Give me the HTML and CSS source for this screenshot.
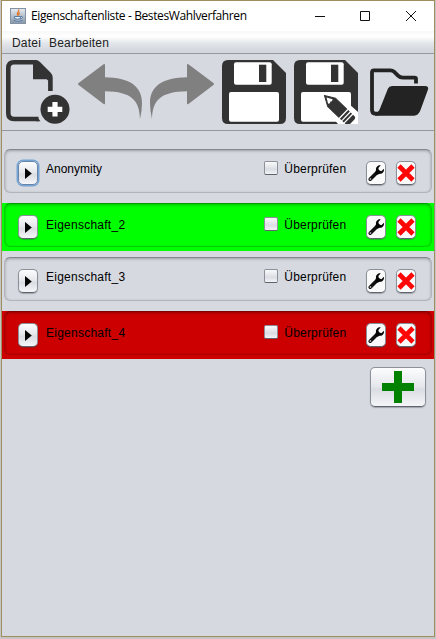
FILE: index.html
```html
<!DOCTYPE html>
<html lang="de">
<head>
<meta charset="utf-8">
<title>Eigenschaftenliste - BestesWahlverfahren</title>
<link rel="stylesheet" href="styles.css">
</head>
<body>
<svg class="defs" width="0" height="0">
  <symbol id="play" viewBox="0 0 20 24"><path d="M7 7v11l6.800-5.500z" fill="#050505"/></symbol>
  <symbol id="wrench" viewBox="0 0 20 24"><path d="M4.200 18.200 12 10.500" stroke="#111" stroke-width="3.600" stroke-linecap="round"/><path d="M14.800 4.300C11.800 4 9.600 6.200 10 9l-.8 3 2.200 1.800 2.400-1.100c2.700.2 4.500-1.900 4.200-5l-2.700 2.500-2.500-.9-.4-2.200z" fill="#050505"/><circle cx="4.400" cy="18" r=".9" fill="#aaa"/></symbol>
  <symbol id="cross" viewBox="0 0 20 24"><path d="m3 5 14 14m0-14L3 19" stroke="#ff0606" stroke-width="4.600"/></symbol>
  <symbol id="floppy" viewBox="0 0 64 64"><path d="M6 0h45l13 13v45q0 6-6 6H6q-6 0-6-6V6q0-6 6-6z" fill="#333"/><rect x="12" y="2.300" width="37.700" height="22.500" rx="2" fill="#fff"/><path d="M37 4.700h7.300V22H37z" fill="#333"/><rect x="7" y="32" width="50" height="29.700" rx="2" fill="#fff"/></symbol>
  <symbol id="arrow" viewBox="0 0 64 64"><path d="M.6 23 25.600 4.200q1.400-.9 1.400.8v12.300C51 17.500 64 26 64 43q0 8-2 16C61.500 41 54 31.500 27 31.300v11.900q0 1.700-1.400.8L.6 25q-1.200-1 0-2z" fill="#808080"/></symbol>
</svg>
<main class="window">
  <header class="titlebar">
    <svg class="java" width="16" height="16" viewBox="0 0 16 16"><defs><linearGradient id="jg" x2="0" y2="1"><stop stop-color="#e7ecf1"/><stop offset="1" stop-color="#8796a9"/></linearGradient></defs><rect x=".5" y=".5" width="15" height="15" fill="url(#jg)" stroke="#8392a3"/><path d="M8.500 1.500c1.800 2-3.200 3-.4 6M10 4.500C8 5.500 8.500 6 9.200 7.500" fill="none" stroke="#e57324" stroke-width="1.200"/><path d="M4.500 8.500h6v2q-3 1.500-6 0zM11 8.500c2-.5 2 1.500 0 2M3.500 12.500q4.500 1.500 9 0" fill="#e9eef4" stroke="#527aa5"/></svg>
    <h1>Eigenschaftenliste - BestesWahlverfahren</h1>
    <svg class="controls" width="102" height="12" viewBox="0 0 102 12" fill="none" stroke="#111"><path d="M0 6.500h10"/><path d="M45.500 1.500h9v9h-9z"/><path d="m91 1 10 10M101 1 91 11"/></svg>
  </header>
  <nav class="menubar"><span>Datei</span><span>Bearbeiten</span></nav>
  <div class="toolbar">
    <svg viewBox="0 0 64 64"><path d="M29 2.300H8q-5.700 0-5.700 6v45q0 5.700 5.700 5.700h24.500" fill="none" stroke="#333" stroke-width="4.600"/><path d="M27 0h3q2 0 4 2l10.500 10.500q2.200 2.200 2.200 5V31h-4.600V20.500l-1.500-1.200H27zM31 56.700l3.500 4.600H30z" fill="#333"/><circle cx="49" cy="49.300" r="14.500" fill="#333"/><path d="M49 42v14.600M41.700 49.300h14.600" stroke="#fff" stroke-width="5.200"/></svg>
    <svg viewBox="0 0 64 64"><use href="#arrow"/></svg>
    <svg class="mirror" viewBox="0 0 64 64"><use href="#arrow"/></svg>
    <svg viewBox="0 0 64 64"><use href="#floppy"/></svg>
    <svg viewBox="0 0 64 64"><use href="#floppy"/><path d="m45 35 19 17v12H44L29 47z" fill="#fff"/><g transform="translate(29.700 34.700) rotate(44)"><path d="M1 0 11-5.700h15.500V5.700H11z" fill="#333" stroke="#333" stroke-linejoin="round"/><path d="M4 0 9.500-3l1 2-1 1.300 1 1.500-1 1.700z" fill="#fff"/><path d="M28.300-6h2.200V6h-2.200zM31.700-6h2V6h-2zM35-6h1.500q2.800 0 2.800 2.800v6.400Q39.300 6 36.500 6H35z" fill="#333"/></g></svg>
    <svg viewBox="0 0 64 64"><path d="M50 23.500V19q0-1.300-1.500-1.300H37q-3 0-5-2l-4-4q-1.500-1.400-3.500-1.400H8q-2 0-2 2V50q0 3.700 3.500 3.700H13" fill="none" stroke="#232323" stroke-width="3.800"/><path d="M26 26h33q4 0 3 3.500L54.500 50q-2 5.700-6.500 5.700H9v-2.500q3.200-.2 4.800-4.200L22 28.500Q23 26 26 26z" fill="#232323"/></svg>
  </div>
  <section class="list">
    <article class="row"><div class="panel"><button class="btn focus"><svg><use href="#play"/></svg></button><span class="name">Anonymity</span><label class="check"><i></i><span>Überprüfen</span></label><button class="btn"><svg><use href="#wrench"/></svg></button><button class="btn del"><svg><use href="#cross"/></svg></button></div></article>
    <article class="row green low"><div class="panel"><button class="btn"><svg><use href="#play"/></svg></button><span class="name wide">Eigenschaft_2</span><label class="check"><i></i><span>Überprüfen</span></label><button class="btn"><svg><use href="#wrench"/></svg></button><button class="btn del"><svg><use href="#cross"/></svg></button></div></article>
    <article class="row"><div class="panel"><button class="btn"><svg><use href="#play"/></svg></button><span class="name wide">Eigenschaft_3</span><label class="check"><i></i><span>Überprüfen</span></label><button class="btn"><svg><use href="#wrench"/></svg></button><button class="btn del"><svg><use href="#cross"/></svg></button></div></article>
    <article class="row red low"><div class="panel"><button class="btn"><svg><use href="#play"/></svg></button><span class="name wide">Eigenschaft_4</span><label class="check"><i></i><span>Überprüfen</span></label><button class="btn"><svg><use href="#wrench"/></svg></button><button class="btn del"><svg><use href="#cross"/></svg></button></div></article>
  </section>
  <button class="btn add"><svg viewBox="0 0 32 32"><path d="M16 0v32M0 16h32" stroke="#008200" stroke-width="8"/></svg></button>
</main>
</body>
</html>
```
FILE: styles.css
```css
* { box-sizing: border-box; }
body {
  margin: 0;
  height: 639px;
  padding: 0 1px 2px;
  overflow: hidden;
  background: #c5c5c7;
  font: 12px/16px "Liberation Sans", Arial, sans-serif;
  color: #000;
}
.defs { position: absolute; }
.window {
  height: 637px;
  border: 1px solid #a08e5c;
  background: #d6d9e0;
}
.titlebar {
  display: flex;
  align-items: center;
  height: 30px;
  padding: 0 17px 0 8px;
  background: #fff;
}
.titlebar h1 {
  margin: 0 0 0 5px;
  font: 12px/16px "Open Sans", "Noto Sans", sans-serif;
  letter-spacing: -0.38px;
  white-space: nowrap;
}
.controls { margin-left: auto; }
.menubar {
  display: flex;
  gap: 8px;
  height: 23px;
  padding: 4px 10px 0;
  border-bottom: 1px solid #9297a1;
  background: linear-gradient(#f7f7f8, #fff 25%, #e3e6ea 55%, #d3d7de 90%);
  color: #222;
}
.menubar span { letter-spacing: 0.2px; }
.toolbar {
  display: flex;
  gap: 8px;
  height: 77px;
  padding: 6px 4px;
  border-bottom: 1px solid #9297a1;
}
.toolbar svg { flex: none; width: 64px; height: 64px; }
.mirror { transform: scaleX(-1); }
.list {
  display: flex;
  flex-direction: column;
  gap: 6px;
  padding-top: 18px;
}
.row { height: 48px; padding-left: 2px; }
.green { background: #0f0; }
.red { background: #c00; }
.panel {
  display: flex;
  height: 44px;
  width: 428px;
  padding: 11px 15px 0 13px;
  border: 1px solid rgba(0, 0, 0, .17);
  border-top-color: rgba(0, 0, 0, .38);
  border-radius: 6px;
  box-shadow: inset 0 1px 3px rgba(0, 0, 0, .27);
}
.btn {
  flex: none;
  width: 20px;
  height: 24px;
  padding: 0;
  border: 1px solid #8c9098;
  border-bottom-color: #5f636b;
  border-radius: 5px;
  background: linear-gradient(#fdfdfe, #e4e6eb 50%, #d9dce2 55%, #f5f6f9);
  box-shadow: 0 1px 1px rgba(60, 65, 75, .35);
}
.btn svg { display: block; width: 20px; height: 24px; margin: -1px; }
.focus { border-color: #6686aa; box-shadow: 0 0 0 1.500px #76a4d3; }
.name + .check + .btn, .del { background: #fafafb; }
.name { width: 219px; margin-left: 8px; }
.wide { letter-spacing: 0.25px; }
.check { display: flex; width: 102px; letter-spacing: 0.2px; }
.check i {
  width: 14px;
  height: 14px;
  margin-right: 6px;
  border: 1px solid #8c9098;
  border-bottom-color: #5f636b;
  border-radius: 2px;
  background: linear-gradient(#fafafb, #dadde3 60%, #f2f3f6);
}
.low .name, .low .check { padding-top: 2px; }
.del { margin-left: 10px; }
.add {
  display: flex;
  align-items: center;
  justify-content: center;
  width: 56px;
  height: 40px;
  margin: 8px 8px 0 auto;
}
.add svg { width: 32px; height: 32px; margin: 0; }
```
